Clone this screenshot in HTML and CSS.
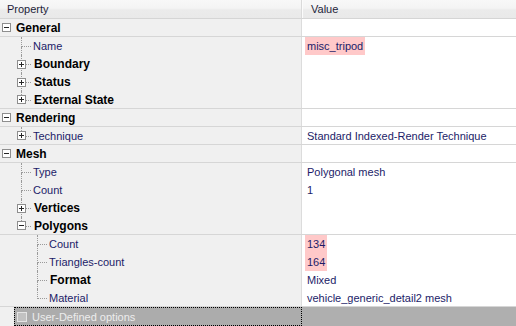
FILE: index.html
```html
<!DOCTYPE html>
<html lang="en">
<head>
    <meta charset="UTF-8">
    <title>Property grid</title>
    <link rel="stylesheet" href="styles.css">
</head>
<body>
    <div class="grid">
        <div class="head">
            <div class="prop">Property</div>
            <div class="val">Value</div>
        </div>

        <div class="row cat sep">
            <div class="prop"><b class="box minus"></b><span class="name">General</span></div>
            <div class="val"></div>
        </div>
        <div class="row">
            <div class="prop l1"><i class="stem"></i><span class="label">Name</span></div>
            <div class="val"><span class="v hl">misc_tripod</span></div>
        </div>
        <div class="row">
            <div class="prop l1"><b class="box plus"></b><i class="stem"></i><span class="label strong">Boundary</span></div>
            <div class="val"></div>
        </div>
        <div class="row">
            <div class="prop l1"><b class="box plus"></b><i class="stem"></i><span class="label strong">Status</span></div>
            <div class="val"></div>
        </div>
        <div class="row sep">
            <div class="prop l1"><b class="box plus"></b><i class="stem end"></i><span class="label strong">External State</span></div>
            <div class="val"></div>
        </div>

        <div class="row cat sep">
            <div class="prop"><b class="box minus"></b><span class="name">Rendering</span></div>
            <div class="val"></div>
        </div>
        <div class="row sep">
            <div class="prop l1"><b class="box plus"></b><i class="stem end"></i><span class="label">Technique</span></div>
            <div class="val"><span class="v">Standard Indexed-Render Technique</span></div>
        </div>

        <div class="row cat sep">
            <div class="prop"><b class="box minus"></b><span class="name">Mesh</span></div>
            <div class="val"></div>
        </div>
        <div class="row">
            <div class="prop l1"><i class="stem"></i><span class="label">Type</span></div>
            <div class="val"><span class="v">Polygonal mesh</span></div>
        </div>
        <div class="row">
            <div class="prop l1"><i class="stem"></i><span class="label">Count</span></div>
            <div class="val"><span class="v">1</span></div>
        </div>
        <div class="row">
            <div class="prop l1"><b class="box plus"></b><i class="stem"></i><span class="label strong">Vertices</span></div>
            <div class="val"></div>
        </div>
        <div class="row sep">
            <div class="prop l1"><b class="box minus"></b><i class="stem end"></i><span class="label strong">Polygons</span></div>
            <div class="val"></div>
        </div>
        <div class="row">
            <div class="prop l2"><i class="stem"></i><span class="label">Count</span></div>
            <div class="val"><span class="v hl">134</span></div>
        </div>
        <div class="row">
            <div class="prop l2"><i class="stem"></i><span class="label">Triangles-count</span></div>
            <div class="val"><span class="v hl">164</span></div>
        </div>
        <div class="row">
            <div class="prop l2"><i class="stem"></i><span class="label strong">Format</span></div>
            <div class="val"><span class="v">Mixed</span></div>
        </div>
        <div class="row sep">
            <div class="prop l2"><i class="stem end"></i><span class="label">Material</span></div>
            <div class="val"><span class="v">vehicle_generic_detail2 mesh</span></div>
        </div>

        <div class="row user">
            <div class="prop">
                <div class="sel"><span class="check"></span><span class="utext">User-Defined options</span></div>
            </div>
            <div class="val"></div>
        </div>
    </div>
</body>
</html>
```

FILE: styles.css
```css
body {
    margin: 0;
    font-family: 'Liberation Sans', Arial, sans-serif;
    font-size: 11px;
    color: #1c1c68;
    background: #ffffff;
}

.grid {
    width: 516px;
    height: 326px;
    overflow: hidden;
    background: #ffffff;
}

/* header */
.head {
    display: flex;
    height: 19px;
    box-sizing: border-box;
    border-bottom: 1px solid #d5d5d5;
    background: linear-gradient(#f8f8f8, #f4f4f4 45%, #ebebeb 55%, #e9e9e9);
    color: #1e1e3a;
}

.head .prop {
    width: 302px;
    box-sizing: border-box;
    padding-left: 7px;
    border-right: 1px solid #dadada;
    display: flex;
    align-items: center;
}

.head .val {
    flex: 1;
    padding-left: 8px;
    border-left: 1px solid #fbfbfb;
    display: flex;
    align-items: center;
}

/* rows */
.row {
    display: flex;
    height: 18px;
    box-sizing: border-box;
}

.row.sep {
    border-bottom: 1px solid #d6d6d6;
}

.row .prop {
    width: 302px;
    flex: none;
    box-sizing: border-box;
    background: #f0f0f0;
    border-right: 1px solid #dcdcdc;
    display: flex;
    align-items: center;
}

.row .val {
    flex: 1;
    padding-left: 3px;
    display: flex;
    align-items: stretch;
}

.cat .prop {
    padding-left: 2px;
}

.cat .box {
    margin-right: 5px;
}

.name {
    font-size: 12px;
    font-weight: bold;
    color: #000000;
}

.l1 {
    padding-left: 21px;
}

.l2 {
    padding-left: 37px;
}

/* expander boxes */
.box {
    width: 9px;
    height: 9px;
    flex: none;
    box-sizing: border-box;
    border: 1px solid #8e8e8e;
    background: #ffffff;
    z-index: 1;
}

.l1 .box,
.l2 .box {
    margin-left: -4px;
    margin-right: -5px;
}

.box.minus {
    background: linear-gradient(#262626, #262626) center / 5px 1px no-repeat, #ffffff;
}

.box.plus {
    background:
        linear-gradient(#262626, #262626) center / 5px 1px no-repeat,
        linear-gradient(#262626, #262626) center / 1px 5px no-repeat,
        #ffffff;
}

/* tree lines */
.stem {
    display: flex;
    flex-direction: column;
    width: 10px;
    flex: none;
    align-self: stretch;
}

.stem::before {
    content: '';
    height: 10px;
    box-sizing: border-box;
    border-left: 1px dotted #9a9a9a;
    border-bottom: 1px dotted #9a9a9a;
}

.stem::after {
    content: '';
    flex: 1;
    border-left: 1px dotted #9a9a9a;
}

.stem.end::after {
    border-left-color: transparent;
}

.label {
    margin-left: 2px;
    white-space: nowrap;
}

.label.strong {
    font-size: 12px;
    font-weight: bold;
    color: #000000;
    margin-left: 3px;
}

/* values */
.v {
    padding: 0 2px;
    display: flex;
    align-items: center;
    white-space: nowrap;
}

.v.hl {
    background: #ffc9c9;
}

/* bottom row */
.row.user {
    height: 19px;
}

.user .prop {
    padding-left: 14px;
    align-items: stretch;
}

.sel {
    flex: 1;
    display: flex;
    align-items: center;
    padding-left: 2px;
    background: #acacac;
    border: 1px dotted #000000;
    margin-right: -1px;
}

.check {
    width: 10px;
    height: 10px;
    box-sizing: border-box;
    border: 1px solid #e4e4e4;
    background: #c2c2c2;
}

.utext {
    margin-left: 5px;
    color: #ececec;
}

.user .val {
    background: #afafaf;
}
```
